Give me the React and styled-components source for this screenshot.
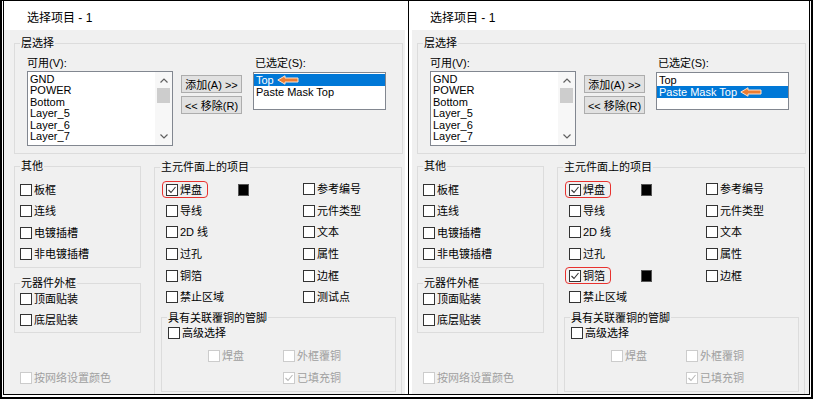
import React from 'react';
import styled, { createGlobalStyle, css } from 'styled-components';

const GlobalStyle = createGlobalStyle`
  html, body {
    margin: 0;
    padding: 0;
    background: #fff;
  }
  body {
    font-family: "Liberation Sans", "Noto Sans CJK SC", sans-serif;
    font-size: 11px;
    color: #000;
  }
`;

// outer double frame
const Frame = styled.div`
  box-sizing: border-box;
  width: 813px;
  height: 399px;
  border: 2px solid #000;
  border-top-width: 1px;
  padding: 0 1px 2px;
  background: #fff;
`;

const Inner = styled.div`
  box-sizing: border-box;
  height: 100%;
  border: 1px solid #000;
  border-top: none;
  display: flex;
`;

const Divider = styled.div`
  width: 7px;
  display: flex;
  justify-content: center;
  background: #fff;
  &::before {
    content: '';
    width: 1px;
    background: #000;
  }
`;

const Panel = styled.div`
  width: ${p => p.$w}px;
  display: flex;
  flex-direction: column;
  overflow: hidden;
`;

const TitleBar = styled.div`
  box-sizing: border-box;
  height: 29px;
  padding: 10px 0 0 ${p => 19 + p.$shift}px;
  background: #fff;
  font-size: 12px;
  line-height: 14px;
`;

const Body = styled.div`
  flex: 1;
  background: #f0f0f0;
  padding-left: ${p => 6 + p.$shift}px;
  overflow: hidden;
`;

const GroupBox = styled.fieldset`
  box-sizing: border-box;
  width: ${p => p.$w}px;
  margin: 0;
  padding: 0;
  min-width: 0;
  border: 1px solid #dcdcdc;
`;

const Legend = styled.legend`
  padding: 0 1px;
  margin-left: 5px;
  line-height: 14px;
  font-size: 11px;
`;

const LayerGroup = styled(GroupBox)`
  margin-top: 6px;
`;

const LayerRow = styled.div`
  display: flex;
  align-items: flex-start;
  padding: 6px 0 7px 12px;
`;

const Column = styled.div`
  display: flex;
  flex-direction: column;
  margin-left: ${p => p.$ml || 0}px;
`;

const FieldLabel = styled.div`
  height: 14px;
  line-height: 14px;
  padding-left: ${p => p.$pl || 0}px;
  margin-bottom: ${p => p.$mb || 0}px;
`;

const ListBox = styled.div`
  box-sizing: border-box;
  width: ${p => p.$w}px;
  height: ${p => p.$h}px;
  border: 1px solid #828790;
  background: #fff;
  display: flex;
  overflow: hidden;
`;

const Items = styled.div`
  flex: 1;
  padding-top: ${p => p.$pt}px;
`;

const Item = styled.div`
  height: ${p => p.$h}px;
  line-height: ${p => p.$h}px;
  padding-left: 2px;
  white-space: nowrap;
  display: flex;
  align-items: center;
  ${p => p.$selected && css`
    background: #0078d7;
    color: #fff;
  `}
`;

const Scrollbar = styled.div`
  width: 17px;
  background: #f7f7f7;
  display: flex;
  flex-direction: column;
  align-items: center;
`;

const ScrollBtn = styled.div`
  height: ${p => p.$h}px;
  width: 100%;
  display: flex;
  align-items: center;
  justify-content: center;
`;

const Thumb = styled.div`
  width: 13px;
  height: 15px;
  background: #cdcdcd;
`;

const Spacer = styled.div`
  flex: 1;
`;

const ButtonStack = styled.div`
  display: flex;
  flex-direction: column;
  gap: 3px;
  margin: 19px 0 0 8px;
`;

const Button = styled.div`
  box-sizing: border-box;
  width: 61px;
  height: 18px;
  border: 1px solid #adadad;
  background: #e1e1e1;
  display: flex;
  align-items: center;
  justify-content: center;
  font-size: 11px;
  white-space: nowrap;
`;

const LowerRow = styled.div`
  display: flex;
  align-items: flex-start;
  margin-top: 5px;
`;

const SideColumn = styled.div`
  width: 127px;
  display: flex;
  flex-direction: column;
`;

const Rows = styled.div`
  display: flex;
  flex-direction: column;
  padding: ${p => p.$pad};
  margin-top: ${p => p.$mt || 0}px;
`;

const CheckRow = styled.div`
  display: flex;
  align-items: center;
  height: ${p => p.$h || 21}px;
  margin-top: ${p => p.$mt || 0}px;
  padding-left: ${p => p.$pl || 0}px;
`;

const MainGroup = styled(GroupBox)`
  margin: 1px 0 0 13px;
`;

const MainGrid = styled.div`
  display: grid;
  grid-template-columns: 72px 65px 1fr;
  grid-auto-rows: 21.6px;
  align-items: center;
  padding: 5px 0 0 11px;
`;

const PinGroup = styled(GroupBox)`
  margin: 2.4px 0 20px 6px;
`;

const PinInner = styled.div`
  padding: 0 0 3px 6px;
`;

const SubGrid = styled.div`
  display: grid;
  grid-template-columns: 75px auto;
  grid-auto-rows: 21px;
  align-items: center;
  margin: 3px 0 0 40px;
`;

const CheckItem = styled.div`
  position: relative;
  display: inline-flex;
  align-items: center;
  height: 14px;
  white-space: nowrap;
  color: ${p => (p.$disabled ? '#a0a0a0' : '#000')};
  ${p => p.$marked && css`
    &::after {
      content: '';
      position: absolute;
      left: -4px;
      right: -6px;
      top: -2px;
      bottom: -1px;
      border: 1.5px solid #e8322f;
      border-radius: 4px;
    }
  `}
`;

const Box = styled.span`
  box-sizing: border-box;
  width: 12px;
  height: 12px;
  border: 1px solid ${p => (p.$disabled ? '#cccccc' : '#333')};
  background: #fff;
  display: flex;
  align-items: center;
  justify-content: center;
`;

const CheckText = styled.span`
  margin-left: 2px;
  line-height: 14px;
`;

const Swatch = styled.span`
  box-sizing: border-box;
  display: block;
  width: 11px;
  height: 12px;
  background: #000;
  border: 1px solid #555;
`;

const Chevron = ({ down }) => (
  <svg width="8" height="5" viewBox="0 0 8 5">
    <polyline
      points={down ? '0.5,0.5 4,4 7.5,0.5' : '0.5,4.5 4,1 7.5,4.5'}
      fill="none"
      stroke="#606060"
      strokeWidth="1.2"
    />
  </svg>
);

const Arrow = () => (
  <svg width="22" height="10" viewBox="0 0 22 10" style={{ marginLeft: 3, flexShrink: 0 }}>
    <polygon
      points="0.8,5 8,0.8 8,3 21,3 21,7 8,7 8,9.2"
      fill="#ed7d31"
      stroke="#fde3d0"
      strokeWidth="1"
      strokeLinejoin="round"
    />
  </svg>
);

const Check = ({ label, checked, disabled, marked }) => (
  <CheckItem $disabled={disabled} $marked={marked}>
    <Box $disabled={disabled}>
      {checked && (
        <svg width="10" height="10" viewBox="0 0 10 10">
          <polyline
            points="1.5,5 4,7.5 8.5,2"
            fill="none"
            stroke={disabled ? '#b8b8b8' : '#333'}
            strokeWidth="1.1"
          />
        </svg>
      )}
    </Box>
    <CheckText>{label}</CheckText>
  </CheckItem>
);

const available = ['GND', 'POWER', 'Bottom', 'Layer_5', 'Layer_6', 'Layer_7'];
const chosen = ['Top', 'Paste Mask Top'];
const others = ['板框', '连线', '电镀插槽', '非电镀插槽'];
const outlines = ['顶面贴装', '底层贴装'];

const leftRows = [
  { l: '焊盘', c: true, m: true, sw: true, r: '参考编号' },
  { l: '导线', r: '元件类型' },
  { l: '2D 线', r: '文本' },
  { l: '过孔', r: '属性' },
  { l: '铜箔', r: '边框' },
  { l: '禁止区域', r: '测试点' },
];

const rightRows = [
  { l: '焊盘', c: true, m: true, sw: true, r: '参考编号' },
  { l: '导线', r: '元件类型' },
  { l: '2D 线', r: '文本' },
  { l: '过孔', r: '属性' },
  { l: '铜箔', c: true, m: true, sw: true, r: '边框' },
  { l: '禁止区域' },
];

const Dialog = ({ width, shift, selected, rows }) => (
  <Panel $w={width}>
    <TitleBar $shift={shift}>选择项目 - 1</TitleBar>
    <Body $shift={shift}>
      <LayerGroup $w={389}>
        <Legend>层选择</Legend>
        <LayerRow>
          <Column>
            <FieldLabel $mb={1}>可用(V):</FieldLabel>
            <ListBox $w={146} $h={75}>
              <Items $pt={1.5}>
                {available.map(name => (
                  <Item key={name} $h={11.6}>{name}</Item>
                ))}
              </Items>
              <Scrollbar>
                <ScrollBtn $h={16}><Chevron /></ScrollBtn>
                <Thumb />
                <Spacer />
                <ScrollBtn $h={17}><Chevron down /></ScrollBtn>
              </Scrollbar>
            </ListBox>
          </Column>
          <ButtonStack>
            <Button>添加(A) &gt;&gt;</Button>
            <Button>&lt;&lt; 移除(R)</Button>
          </ButtonStack>
          <Column $ml={11}>
            <FieldLabel $pl={2} $mb={2}>已选定(S):</FieldLabel>
            <ListBox $w={133} $h={38}>
              <Items $pt={1}>
                {chosen.map((name, i) => (
                  <Item key={name} $h={12} $selected={i === selected}>
                    {name}
                    {i === selected && <Arrow />}
                  </Item>
                ))}
              </Items>
            </ListBox>
          </Column>
        </LayerRow>
      </LayerGroup>

      <LowerRow>
        <SideColumn>
          <GroupBox $w={127}>
            <Legend>其他</Legend>
            <Rows $pad="6px 0 2px 5px">
              {others.map(o => (
                <CheckRow key={o} $h={21.5}><Check label={o} /></CheckRow>
              ))}
            </Rows>
          </GroupBox>
          <GroupBox $w={127} style={{ marginTop: 8 }}>
            <Legend>元器件外框</Legend>
            <Rows $pad="0 0 1px 5px" $mt={-1.5}>
              {outlines.map(o => (
                <CheckRow key={o}><Check label={o} /></CheckRow>
              ))}
            </Rows>
          </GroupBox>
          <CheckRow $mt={34.5} $pl={6}>
            <Check label="按网络设置颜色" disabled />
          </CheckRow>
        </SideColumn>

        <MainGroup $w={248}>
          <Legend>主元件面上的项目</Legend>
          <MainGrid>
            {rows.map(row => (
              <React.Fragment key={row.l}>
                <div><Check label={row.l} checked={row.c} marked={row.m} /></div>
                <div>{row.sw && <Swatch />}</div>
                <div>{row.r && <Check label={row.r} />}</div>
              </React.Fragment>
            ))}
          </MainGrid>
          <PinGroup $w={235}>
            <Legend>具有关联覆铜的管脚</Legend>
            <PinInner>
              <CheckRow $mt={-2.5}><Check label="高级选择" /></CheckRow>
              <SubGrid>
                <div><Check label="焊盘" disabled /></div>
                <div><Check label="外框覆铜" disabled /></div>
                <div />
                <div><Check label="已填充铜" checked disabled /></div>
              </SubGrid>
            </PinInner>
          </PinGroup>
        </MainGroup>
      </LowerRow>
    </Body>
  </Panel>
);

export default function App() {
  return (
    <>
      <GlobalStyle />
      <Frame>
        <Inner>
          <Dialog width={401} shift={4} selected={0} rows={leftRows} />
          <Divider />
          <Dialog width={397} shift={-1} selected={1} rows={rightRows} />
        </Inner>
      </Frame>
    </>
  );
}
